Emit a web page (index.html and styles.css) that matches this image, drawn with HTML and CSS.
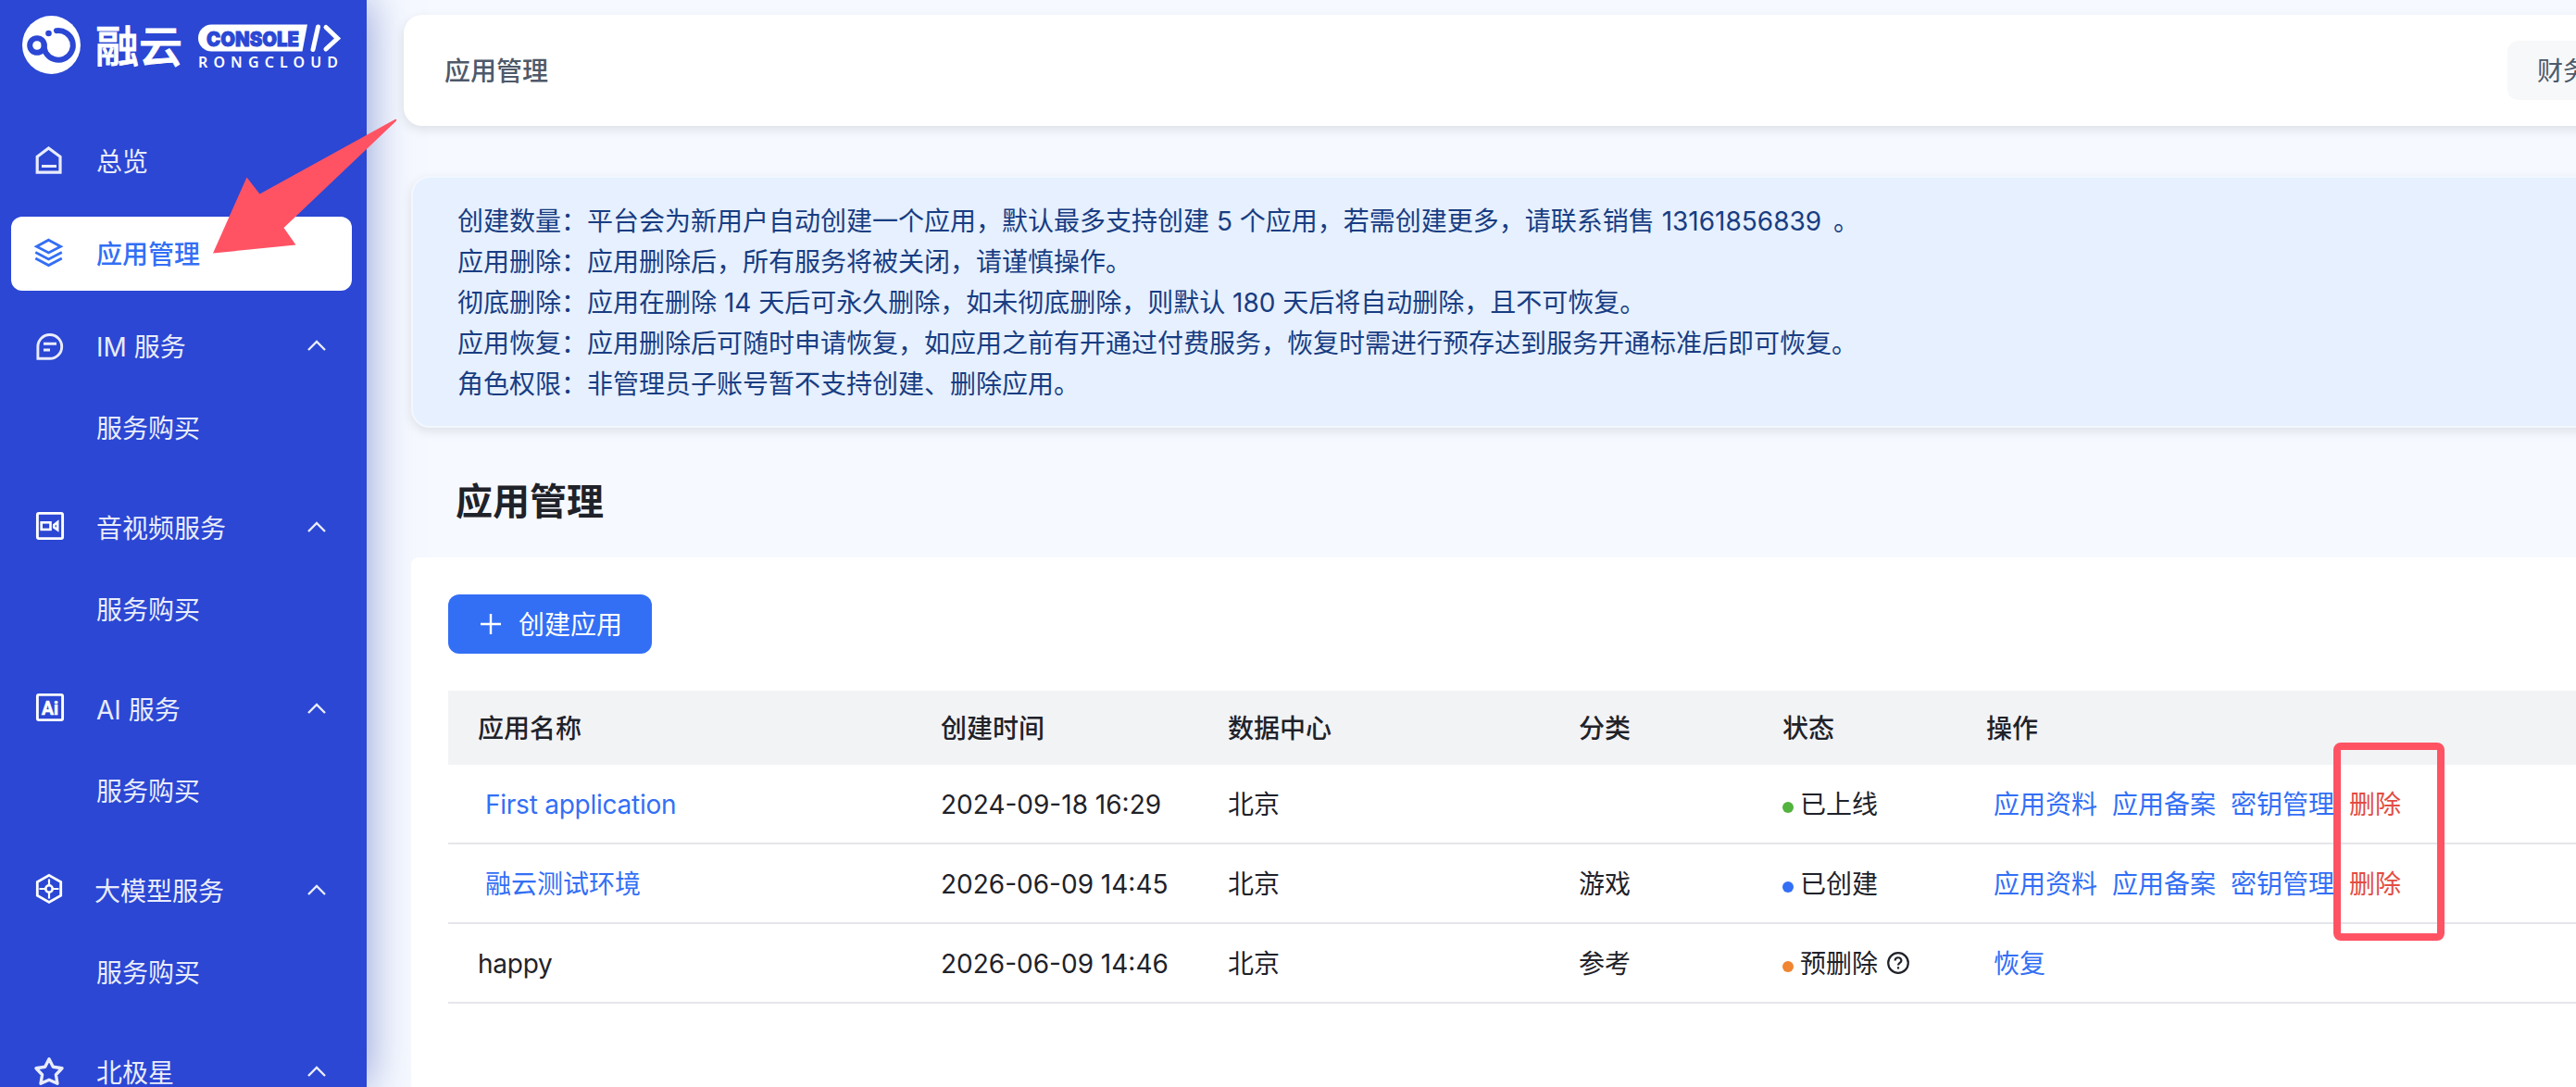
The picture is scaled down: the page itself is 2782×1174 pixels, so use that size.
FILE: index.html
```html
<!DOCTYPE html>
<html lang="zh-CN">
<head>
  <meta charset="UTF-8">
  <meta name="viewport" content="width=device-width, initial-scale=1.0">
  <title>应用管理 - 融云控制台</title>
  <link rel="stylesheet" href="styles.css">
</head>
<body>

<div class="layout">

  <!-- 侧边栏 -->
  <aside class="sidebar">
    <div class="logo">
      <svg width="396" height="96" viewBox="0 0 396 96">
        <circle cx="55.5" cy="48.5" r="31.5" fill="#fff"/>
        <g fill="none" stroke="#2b47d4" stroke-width="6" stroke-linecap="round">
          <circle cx="40" cy="49" r="7.8"/>
          <path d="M61 33.2 A15.8 15.8 0 1 1 49.5 57 C47.8 54 47.5 51 47.5 48"/>
        </g>
        <circle cx="52.5" cy="36" r="3.3" fill="#2b47d4"/>
        <text class="logo-name" x="103" y="66.5" textLength="94">融云</text>
        <path d="M228.5 26.5 H332 L326.5 55.5 H228.5 A14.5 14.5 0 0 1 228.5 26.5 Z" fill="#fff"/>
        <text class="logo-console" x="223" y="49.5" textLength="100" lengthAdjust="spacingAndGlyphs">CONSOLE</text>
        <path d="M343.5 29 L338 53.5 M352 29.5 L364.5 41.5 L352 53" fill="none" stroke="#fff" stroke-width="5" stroke-linecap="round"/>
        <text class="logo-sub" x="214" y="73" textLength="151">RONGCLOUD</text>
      </svg>
    </div>

    <nav class="menu">
      <div class="menu-item">
        <svg class="icon" viewBox="0 0 32 32"><path d="M16.5 2 L29 11.3 V28.2 H4.2 V11.3 Z M9 21.5 H25" stroke-width="3.2"/></svg>
        <span>总览</span>
      </div>
      <div class="menu-item active">
        <svg class="icon" viewBox="0 0 32 32"><path d="M16.5 1.2 L29.5 8.2 L16.5 15 L3.5 8.2 Z M2.3 14.5 L16.5 22 L30.8 14.5 M2.3 21 L16.5 28.6 L30.8 21" stroke-width="2.8"/></svg>
        <span>应用管理</span>
      </div>
      <div class="menu-group">
        <div class="menu-item">
          <svg class="icon" viewBox="0 0 32 32"><path d="M4.9 29.3 V16.4 A12.9 12.9 0 1 1 17.8 29.3 Z M11 13.2 H25 M11 20 H18" stroke-width="2.9"/></svg>
          <span>IM 服务</span>
          <svg class="arrow" viewBox="0 0 20 12"><path d="M1 11 L10 2 L19 11"/></svg>
        </div>
        <div class="sub-item">服务购买</div>
      </div>
      <div class="menu-group">
        <div class="menu-item">
          <svg class="icon strong" viewBox="0 0 32 32"><rect x="4.4" y=".4" width="27.2" height="27.2" rx="1.5" stroke-width="2.9"/><rect x="8.7" y="10.3" width="9.8" height="7.6" stroke-width="2.6"/><path d="M22.3 13 L26.2 10 V18.2 L22.3 15.5 Z" stroke-width="2.6"/></svg>
          <span>音视频服务</span>
          <svg class="arrow" viewBox="0 0 20 12"><path d="M1 11 L10 2 L19 11"/></svg>
        </div>
        <div class="sub-item">服务购买</div>
      </div>
      <div class="menu-group">
        <div class="menu-item">
          <svg class="icon strong" viewBox="0 0 32 32"><rect x="4.4" y=".4" width="27.2" height="27.2" rx="1.5" stroke-width="2.9"/><text class="icon-text" x="9" y="22" textLength="18" lengthAdjust="spacingAndGlyphs">Ai</text></svg>
          <span>AI 服务</span>
          <svg class="arrow" viewBox="0 0 20 12"><path d="M1 11 L10 2 L19 11"/></svg>
        </div>
        <div class="sub-item">服务购买</div>
      </div>
      <div class="menu-group">
        <div class="menu-item">
          <svg class="icon strong" viewBox="0 0 32 32"><path d="M17 -.6 L29.7 6.6 V21.2 L17 28.4 L4.3 21.2 V6.6 Z" stroke-width="2.8"/><circle cx="17" cy="14" r="3.7" stroke-width="2.6"/><path d="M17 3.5 V10 M17 18 V24.5 M6.5 14 H13 M21 14 H27.5" stroke-width="2.2"/></svg>
          <span class="wide">大模型服务</span>
          <svg class="arrow" viewBox="0 0 20 12"><path d="M1 11 L10 2 L19 11"/></svg>
        </div>
        <div class="sub-item">服务购买</div>
      </div>
      <div class="menu-group">
        <div class="menu-item">
          <svg class="icon" viewBox="0 0 32 32"><path d="M17 1.8 L21.3 10.3 L31 11.8 L24.4 18.7 L26 28.3 L17 24.2 L8 28.3 L9.6 18.7 L3 11.8 L12.7 10.3 Z" stroke-width="3.4" stroke-linejoin="round"/></svg>
          <span>北极星</span>
          <svg class="arrow" viewBox="0 0 20 12"><path d="M1 11 L10 2 L19 11"/></svg>
        </div>
      </div>
    </nav>
  </aside>

  <!-- 主内容 -->
  <main class="main">
    <header class="topbar">
      <span class="topbar-title">应用管理</span>
      <div class="topbar-btn">财务</div>
    </header>

    <div class="content">
      <div class="notice">
        <p>创建数量：平台会为新用户自动创建一个应用，默认最多支持创建 5 个应用，若需创建更多，请联系销售 <span class="phone">13161856839</span> 。</p>
        <p>应用删除：应用删除后，所有服务将被关闭，请谨慎操作。</p>
        <p>彻底删除：应用在删除 14 天后可永久删除，如未彻底删除，则默认 180 天后将自动删除，且不可恢复。</p>
        <p>应用恢复：应用删除后可随时申请恢复，如应用之前有开通过付费服务，恢复时需进行预存达到服务开通标准后即可恢复。</p>
        <p>角色权限：非管理员子账号暂不支持创建、删除应用。</p>
      </div>

      <h1 class="page-title">应用管理</h1>

      <section class="panel">
        <button class="create-btn">
          <svg width="24" height="24" viewBox="0 0 24 24"><path d="M12 1 V23 M1 12 H23"/></svg>
          <span>创建应用</span>
        </button>

        <div class="table">
          <div class="row head">
            <div>应用名称</div>
            <div>创建时间</div>
            <div>数据中心</div>
            <div>分类</div>
            <div>状态</div>
            <div>操作</div>
          </div>
          <div class="row">
            <div><a class="link name">First application</a></div>
            <div>2024-09-18 16:29</div>
            <div>北京</div>
            <div></div>
            <div class="status"><i class="dot green"></i>已上线</div>
            <div><a class="link">应用资料</a><a class="link">应用备案</a><a class="link">密钥管理</a><a class="link danger">删除</a></div>
          </div>
          <div class="row">
            <div><a class="link">融云测试环境</a></div>
            <div>2026-06-09 14:45</div>
            <div>北京</div>
            <div>游戏</div>
            <div class="status"><i class="dot blue"></i>已创建</div>
            <div><a class="link">应用资料</a><a class="link">应用备案</a><a class="link">密钥管理</a><a class="link danger">删除</a></div>
          </div>
          <div class="row">
            <div class="name">happy</div>
            <div>2026-06-09 14:46</div>
            <div>北京</div>
            <div>参考</div>
            <div class="status"><i class="dot orange"></i>预删除
              <svg class="help" viewBox="0 0 24 24"><circle cx="12" cy="12" r="10.8"/><path d="M8.6 9.6 C8.6 5.2 15.4 5.2 15.4 9.4 C15.4 11.8 12 11.8 12 14.6 M12 16.3 V18.6"/></svg>
            </div>
            <div><a class="link">恢复</a></div>
          </div>
        </div>
      </section>
    </div>
  </main>

  <!-- 标注：箭头和方框 -->
  <svg class="mark-arrow" width="200" height="146" viewBox="0 0 200 146"><path d="M0 145.5 L36.5 63.5 L50.5 81.5 L196.5 1 Q199.5 0 197.5 3 L76.5 118 L89.5 136.5 Z"/></svg>
  <div class="mark-box"></div>

</div>

</body>
</html>
```
FILE: styles.css
```css
/* =====================
   颜色变量
   ===================== */
:root {
  --color-bg: #f6f9ff;
  --color-sidebar: #2b47d4;
  --color-menu-text: #e9ecfb;
  --color-primary: #336ff5;
  --color-text: #1f2229;
  --color-text-2: #4e5969;
  --color-notice-bg: #e6f0ff;
  --color-notice-text: #183d82;
  --color-danger: #e34d42;
  --color-mark: #ff5364;
}

/* =====================
   基础布局
   ===================== */
* {
  box-sizing: border-box;
}

body {
  margin: 0;
  font-family: Inter, "Noto Sans CJK SC", sans-serif;
  font-size: 28px;
  line-height: 44px;
  color: var(--color-text);
  background: var(--color-bg);
}

.layout {
  position: relative;
  display: flex;
  height: 1174px;
  overflow: hidden;
}

/* =====================
   侧边栏
   ===================== */
.sidebar {
  width: 396px;
  flex-shrink: 0;
  background: var(--color-sidebar);
  box-shadow: 0 0 44px rgba(29, 57, 170, 0.5);
  color: var(--color-menu-text);
}

.logo {
  height: 134px;
}

.logo svg {
  display: block;
}

.logo-name {
  font-size: 47px;
  font-weight: 500;
  fill: #fff;
  stroke: #fff;
  stroke-width: 0.9;
}

.logo-console {
  font-size: 22px;
  font-weight: 900;
  fill: var(--color-sidebar);
  stroke: var(--color-sidebar);
  stroke-width: 0.9;
}

.logo-sub {
  font-family: "Noto Sans", sans-serif;
  font-size: 16px;
  font-weight: 600;
  fill: #fff;
}

.menu {
  display: flex;
  flex-direction: column;
  gap: 20px;
  padding: 0 16px 0 12px;
}

.menu-item {
  display: flex;
  align-items: center;
  height: 80px;
  padding: 0 28px 0 24px;
  border-radius: 12px;
}

.menu-item span {
  padding-top: 2px;
}

.menu-item.active {
  background: #fff;
  color: var(--color-primary);
  font-weight: 500;
}

.icon {
  width: 32px;
  height: 32px;
  margin-right: 36px;
  overflow: visible;
  fill: none;
  stroke: currentColor;
}

.icon.strong {
  color: #fff;
}

.icon-text {
  font-family: Roboto, sans-serif;
  font-size: 21px;
  font-weight: 700;
  fill: #fff;
  stroke: #fff;
  stroke-width: 0.6;
}

.wide {
  margin-left: -2px;
}

.arrow {
  width: 20px;
  height: 12px;
  margin-left: auto;
  margin-bottom: 2px;
  overflow: visible;
  fill: none;
  stroke: currentColor;
  stroke-width: 2.4;
}

.sub-item {
  height: 96px;
  padding-left: 92px;
  line-height: 98px;
}

/* =====================
   顶栏
   ===================== */
.main {
  flex: 1;
  min-width: 0;
  display: flex;
  flex-direction: column;
  padding: 16px 0 0 40px;
}

.topbar {
  display: flex;
  align-items: center;
  justify-content: space-between;
  height: 120px;
  flex-shrink: 0;
  margin-right: -20px;
  padding: 0 20px 0 44px;
  background: #fff;
  border-radius: 20px 0 0 20px;
  box-shadow: 0 4px 12px rgba(0, 0, 0, 0.1);
  color: var(--color-text-2);
}

.topbar-title {
  padding-top: 2px;
  font-weight: 500;
}

.topbar-btn {
  width: 74px;
  height: 64px;
  padding-left: 32px;
  line-height: 66px;
  white-space: nowrap;
  overflow: hidden;
  background: #f7f8fa;
  border-radius: 12px 0 0 12px;
}

/* =====================
   提示与标题
   ===================== */
.content {
  flex: 1;
  display: flex;
  flex-direction: column;
  padding: 54px 0 0 8px;
}

.notice {
  margin-right: -20px;
  padding: 25px 48px 23px;
  border: 2px solid #f2f7ff;
  border-radius: 20px 0 0 20px;
  background: var(--color-notice-bg);
  background-clip: padding-box;
  box-shadow: 0 4px 12px rgba(0, 0, 0, 0.1);
  color: var(--color-notice-text);
}

.notice p {
  margin: 0;
  white-space: nowrap;
}

.phone {
  margin-right: 5px;
}

.page-title {
  margin: 0;
  padding-left: 48px;
  height: 140px;
  line-height: 159px;
  font-size: 40px;
  font-weight: 600;
}

/* =====================
   应用列表
   ===================== */
.panel {
  flex: 1;
  padding: 40px 0 0 40px;
  background: #fff;
  border-radius: 8px 0 0 0;
}

.create-btn {
  display: flex;
  align-items: center;
  gap: 18px;
  width: 220px;
  height: 64px;
  padding: 0 0 0 34px;
  border: none;
  border-radius: 12px;
  background: var(--color-primary);
  color: #fff;
  font: inherit;
  cursor: pointer;
}

.create-btn span {
  padding-top: 1px;
}

.create-btn svg {
  fill: none;
  stroke: #fff;
  stroke-width: 2.4;
}

.table {
  margin-top: 40px;
}

.row {
  display: grid;
  grid-template-columns: 500px 310px 379px 220px 220px 1fr;
  align-items: center;
  height: 86px;
  border-bottom: 2px solid #e5e6eb;
}

.row > div {
  padding: 2px 0 0 32px;
  white-space: nowrap;
}

.row.head {
  height: 80px;
  border-bottom: none;
  background: #f2f3f5;
  font-weight: 500;
}

.name {
  letter-spacing: -0.25px;
}

.link {
  margin: 0 8px;
  color: var(--color-primary);
  cursor: pointer;
}

.link.danger {
  color: var(--color-danger);
}

.status {
  display: flex;
  align-items: center;
}

.dot {
  width: 12px;
  height: 12px;
  margin: 6px 7px 0 0;
  border-radius: 50%;
}

.dot.green { background: #52b33f; }
.dot.blue { background: #336ff5; }
.dot.orange { background: #f08532; }

.help {
  width: 24px;
  height: 24px;
  margin: -2px 0 0 10px;
  fill: none;
  stroke: var(--color-text);
  stroke-width: 2.2;
}

/* =====================
   标注
   ===================== */
.mark-arrow {
  position: absolute;
  left: 230px;
  top: 128px;
  fill: var(--color-mark);
}

.mark-box {
  position: absolute;
  left: 2520px;
  top: 802px;
  width: 120px;
  height: 214px;
  border: 8px solid var(--color-mark);
  border-radius: 8px;
}
```
